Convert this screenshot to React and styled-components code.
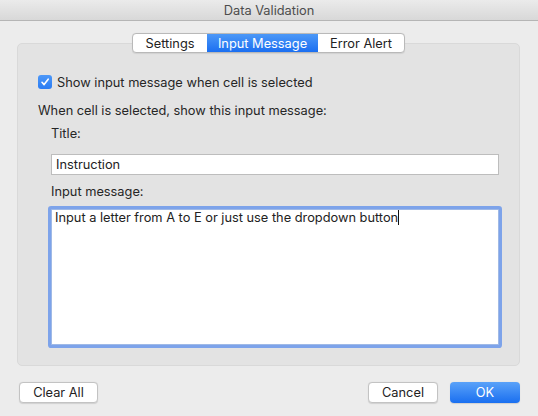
import React from "react";
import styled, { createGlobalStyle } from "styled-components";

const GlobalStyle = createGlobalStyle`
  html, body {
    margin: 0;
    padding: 0;
    background: #ececec;
  }
  body {
    font-family: Inter, "Liberation Sans", Arial, sans-serif;
    font-size: 12.8px;
    color: #262626;
  }
`;

const Window = styled.div`
  width: 538px;
  height: 416px;
  background: #ececec;
  display: flex;
  flex-direction: column;
  overflow: hidden;
`;

const TitleBar = styled.div`
  height: 20px;
  flex: none;
  display: flex;
  align-items: center;
  justify-content: center;
  background: linear-gradient(#ebebeb, #d8d8d8);
  border-bottom: 1px solid #b5b5b5;
  color: #4d4d4d;
`;

const Body = styled.div`
  padding: 12px 18px 0 17px;
  display: flex;
  flex-direction: column;
`;

const Tabs = styled.div`
  align-self: center;
  display: flex;
  height: 18px;
  border: 1px solid #b9b9b9;
  border-radius: 4px;
  background: #fff;
  overflow: hidden;
  position: relative;
  z-index: 1;
  box-shadow: 0 0.5px 1px rgba(0, 0, 0, 0.08);
`;

const Tab = styled.div`
  width: ${(p) => p.$w}px;
  display: flex;
  align-items: center;
  justify-content: center;
  color: ${(p) => (p.$active ? "#fff" : "#222")};
  background: ${(p) =>
    p.$active ? "linear-gradient(#4c98f7, #1b6ff1)" : "transparent"};
`;

const Group = styled.div`
  margin-top: -10px;
  background: #e3e3e3;
  border: 1px solid #d9d9d9;
  border-radius: 5px;
  padding: 30px 20px 20px 20px;
  display: flex;
  flex-direction: column;
`;

const CheckRow = styled.label`
  display: flex;
  align-items: center;
  height: 16px;
  gap: 5px;
`;

const Check = styled.span`
  width: 14px;
  height: 14px;
  border-radius: 3px;
  background: linear-gradient(#4d98f8, #2a7cf3);
  display: flex;
  align-items: center;
  justify-content: center;
  flex: none;
`;

const Label = styled.div`
  line-height: 16px;
  height: 16px;
  margin-top: ${(p) => p.$mt || 0}px;
  margin-left: ${(p) => p.$ml || 0}px;
`;

const Field = styled.div`
  margin: 12px 0 0 13px;
  height: 19px;
  background: #fff;
  border: 1px solid #bdbdbd;
  padding: 0 4px;
  display: flex;
  align-items: center;
  color: #222;
`;

const MessageBox = styled.div`
  margin: 9px 0 0 13px;
  height: 134px;
  background: #fff;
  border: 1px solid #9fb9e6;
  box-shadow: 0 0 0 3px #7da3ea;
  border-radius: 1px;
  padding: 0 3px;
  line-height: 15px;
  color: #222;
`;

const Caret = styled.span`
  display: inline-block;
  width: 1px;
  height: 15px;
  background: #111;
  vertical-align: -3px;
`;

const Footer = styled.div`
  display: flex;
  align-items: center;
  margin-top: 16px;
  padding-left: 2px;
  gap: 12px;
`;

const Spacer = styled.div`
  flex: 1;
`;

const Button = styled.button`
  width: ${(p) => p.$w}px;
  height: 21px;
  border-radius: 4px;
  font-family: inherit;
  font-size: inherit;
  padding: 0;
  border: ${(p) => (p.$primary ? "none" : "1px solid #c3c3c3")};
  background: ${(p) =>
    p.$primary ? "linear-gradient(#5aa2f9, #1a6ff0)" : "#fff"};
  color: ${(p) => (p.$primary ? "#fff" : "#222")};
  box-shadow: 0 0.5px 1px rgba(0, 0, 0, 0.12);
`;

export default function App() {
  return (
    <>
      <GlobalStyle />
      <Window>
        <TitleBar>Data Validation</TitleBar>
        <Body>
          <Tabs>
            <Tab $w={74}>Settings</Tab>
            <Tab $w={111} $active>
              Input Message
            </Tab>
            <Tab $w={86}>Error Alert</Tab>
          </Tabs>
          <Group>
            <CheckRow>
              <Check>
                <svg width="10" height="10" viewBox="0 0 10 10">
                  <path
                    d="M2 5.3 L4.1 7.6 L8.2 2.2"
                    fill="none"
                    stroke="#fff"
                    strokeWidth="1.6"
                    strokeLinecap="round"
                    strokeLinejoin="round"
                  />
                </svg>
              </Check>
              Show input message when cell is selected
            </CheckRow>
            <Label $mt={13}>When cell is selected, show this input message:</Label>
            <Label $mt={7} $ml={13}>
              Title:
            </Label>
            <Field>Instruction</Field>
            <Label $mt={9} $ml={13}>
              Input message:
            </Label>
            <MessageBox>
              Input a letter from A to E or just use the dropdown button
              <Caret />
            </MessageBox>
          </Group>
          <Footer>
            <Button $w={79}>Clear All</Button>
            <Spacer />
            <Button $w={70}>Cancel</Button>
            <Button $w={70} $primary>
              OK
            </Button>
          </Footer>
        </Body>
      </Window>
    </>
  );
}
